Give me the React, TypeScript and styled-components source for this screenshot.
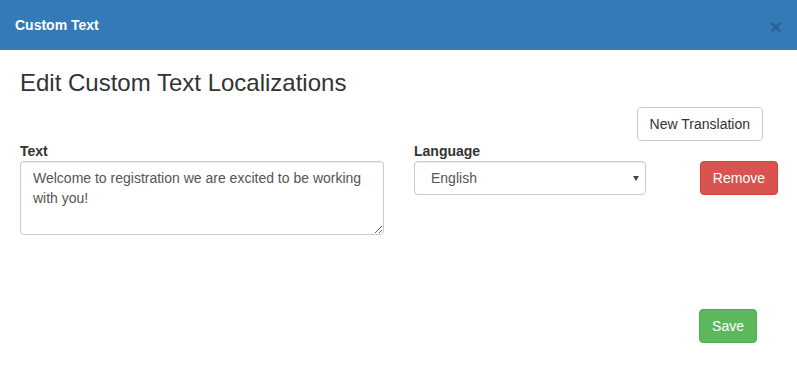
import styled, { createGlobalStyle } from "styled-components";

const GlobalStyle = createGlobalStyle`
    html, body {
        margin: 0;
        padding: 0;
        background: #fff;
    }
    body {
        font-family: "Liberation Sans", Arial, sans-serif;
        font-size: 14px;
        line-height: 1.42857;
        color: #333;
    }
    * { box-sizing: border-box; }
`;

const STModal = styled.div`
    width: 797px;
    height: 382px;
    background: #fff;
    display: flex;
    flex-direction: column;
`;

const STHeader = styled.div`
    height: 50px;
    padding: 15px;
    background: #337ab7;
    display: flex;
    align-items: center;
    justify-content: space-between;
`;

const STTitle = styled.h4`
    margin: 0;
    font-size: 14px;
    font-weight: 700;
    line-height: 20px;
    color: #fff;
`;

const STClose = styled.button`
    padding: 0;
    border: 0;
    background: transparent;
    font-family: "Liberation Sans", Arial, sans-serif;
    font-size: 21px;
    font-weight: 700;
    line-height: 1;
    color: #000;
    opacity: 0.2;
    margin-top: 2px;
    cursor: pointer;
`;

const STBody = styled.div`
    padding: 20px 19px 0 20px;
    display: flex;
    flex-direction: column;
`;

const STHeading = styled.h3`
    margin: 0;
    font-size: 24px;
    font-weight: 500;
    line-height: 1.1;
    color: #333;
`;

const STToolbar = styled.div<{ right: number, top: number }>`
    display: flex;
    justify-content: flex-end;
    padding-right: ${p => p.right}px;
    margin-top: ${p => p.top}px;
`;

const STButton = styled.button<{ variant?: "default" | "danger" | "success" }>`
    display: inline-block;
    height: 34px;
    padding: 6px 12px;
    font-family: "Liberation Sans", Arial, sans-serif;
    font-size: 14px;
    line-height: 20px;
    border-radius: 4px;
    border: 1px solid #ccc;
    background: #fff;
    color: #333;
    white-space: nowrap;
    cursor: pointer;
    ${p => p.variant === "danger" && `
        background: #d9534f;
        border-color: #d43f3a;
        color: #fff;
    `}
    ${p => p.variant === "success" && `
        background: #5cb85c;
        border-color: #4cae4c;
        color: #fff;
    `}
`;

const STFormRow = styled.div`
    display: flex;
    align-items: flex-start;
`;

const STField = styled.div<{ width: number, offset?: number }>`
    display: flex;
    flex-direction: column;
    width: ${p => p.width}px;
    margin-left: ${p => p.offset || 0}px;
`;

const STLabel = styled.label`
    font-weight: 700;
    line-height: 20px;
    color: #333;
`;

const STTextArea = styled.textarea`
    width: 100%;
    height: 74px;
    padding: 6px 12px;
    font-family: "Liberation Sans", Arial, sans-serif;
    font-size: 14px;
    line-height: 20px;
    color: #555;
    border: 1px solid #ccc;
    border-radius: 4px;
    box-shadow: inset 0 1px 1px rgba(0, 0, 0, .075);
    outline: none;
`;

const STSelectWrap = styled.div`
    position: relative;
    width: 100%;
    &::after {
        content: "";
        position: absolute;
        right: 7px;
        top: 15px;
        border-left: 3px solid transparent;
        border-right: 3px solid transparent;
        border-top: 5px solid #444;
        pointer-events: none;
    }
`;

const STSelect = styled.select`
    appearance: none;
    width: 100%;
    height: 34px;
    padding: 6px 12px 6px 16px;
    font-family: "Liberation Sans", Arial, sans-serif;
    font-size: 14px;
    line-height: 20px;
    color: #555;
    background: #fff;
    border: 1px solid #ccc;
    border-radius: 4px;
    box-shadow: inset 0 1px 1px rgba(0, 0, 0, .075);
    outline: none;
`;

const STRemoveCell = styled.div`
    margin-left: auto;
    padding-top: 20px;
`;

const App = (): JSX.Element => {
    return <>
        <GlobalStyle />
        <STModal>
            <STHeader>
                <STTitle>Custom Text</STTitle>
                <STClose aria-label="Close">×</STClose>
            </STHeader>
            <STBody>
                <STHeading>Edit Custom Text Localizations</STHeading>
                <STToolbar right={15} top={11}>
                    <STButton>New Translation</STButton>
                </STToolbar>
                <STFormRow>
                    <STField width={364}>
                        <STLabel>Text</STLabel>
                        <STTextArea rows={3} defaultValue="Welcome to registration we are excited to be working with you!" />
                    </STField>
                    <STField width={232} offset={30}>
                        <STLabel>Language</STLabel>
                        <STSelectWrap>
                            <STSelect defaultValue="en">
                                <option value="en">English</option>
                                <option value="es">Spanish</option>
                                <option value="fr">French</option>
                            </STSelect>
                        </STSelectWrap>
                    </STField>
                    <STRemoveCell>
                        <STButton variant="danger">Remove</STButton>
                    </STRemoveCell>
                </STFormRow>
                <STToolbar right={21} top={74}>
                    <STButton variant="success">Save</STButton>
                </STToolbar>
            </STBody>
        </STModal>
    </>
};

export default App;
